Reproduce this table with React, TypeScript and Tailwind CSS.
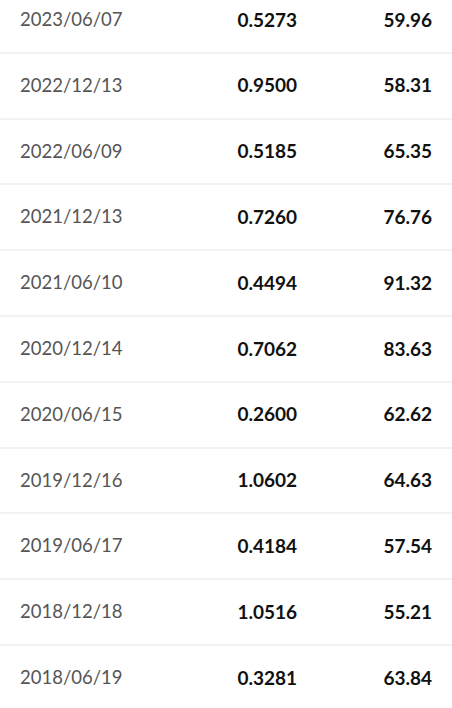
const rows = [
  ["2023/06/07", "0.5273", "59.96"],
  ["2022/12/13", "0.9500", "58.31"],
  ["2022/06/09", "0.5185", "65.35"],
  ["2021/12/13", "0.7260", "76.76"],
  ["2021/06/10", "0.4494", "91.32"],
  ["2020/12/14", "0.7062", "83.63"],
  ["2020/06/15", "0.2600", "62.62"],
  ["2019/12/16", "1.0602", "64.63"],
  ["2019/06/17", "0.4184", "57.54"],
  ["2018/12/18", "1.0516", "55.21"],
  ["2018/06/19", "0.3281", "63.84"],
]

export default function App() {
  return (
    <div className="h-[708px] overflow-hidden bg-white font-['Lato',sans-serif]">
      <div className="-mt-[12px]">
        {rows.map(([date, dividend, price]) => (
          <div
            key={date}
            className="grid h-[65.8px] grid-cols-[1fr_1fr_135px] items-center border-b-2 border-[#f2f2f2] px-5 text-[19px]"
          >
            <span className="text-[18.5px] font-normal text-[#555]">{date}</span>
            <span className="text-right font-bold text-[#111]">{dividend}</span>
            <span className="text-right font-bold text-[#111]">{price}</span>
          </div>
        ))}
      </div>
    </div>
  )
}
